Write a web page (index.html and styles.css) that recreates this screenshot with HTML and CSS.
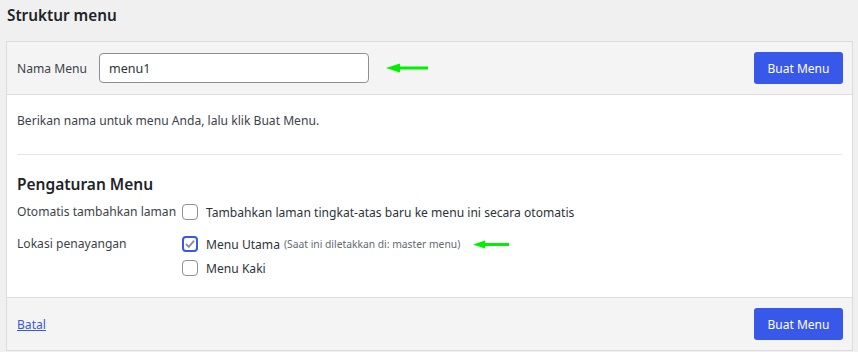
FILE: index.html
```html
<!DOCTYPE html>
<html lang="id">
<head>
    <meta charset="UTF-8">
    <link rel="stylesheet" href="styles.css">
    <title>Struktur menu</title>
</head>
<body>
    <h2 class="page-title">Struktur menu</h2>
    <div class="menu-box">
        <div class="box-header">
            <label class="name-label" for="menu-name">Nama Menu</label>
            <input type="text" id="menu-name" class="name-input" value="menu1">
            <svg class="arrow" width="44" height="10" viewBox="0 0 44 10">
                <path d="M1 5 L15 0.5 L15 3.5 L43 3.5 L43 6.5 L15 6.5 L15 9.5 Z" fill="#00f000"/>
            </svg>
            <button class="btn-primary">Buat Menu</button>
        </div>
        <div class="box-body">
            <p class="hint">Berikan nama untuk menu Anda, lalu klik Buat Menu.</p>
            <div class="divider"></div>
            <h3 class="section-title">Pengaturan Menu</h3>
            <div class="setting-row">
                <div class="setting-label">Otomatis tambahkan laman</div>
                <div class="setting-options">
                    <label class="option"><span class="checkbox"></span>Tambahkan laman tingkat-atas baru ke menu ini secara otomatis</label>
                </div>
            </div>
            <div class="setting-row locations">
                <div class="setting-label">Lokasi penayangan</div>
                <div class="setting-options">
                    <label class="option">
                        <span class="checkbox checked">
                            <svg width="14" height="14" viewBox="0 0 14 14"><path d="M2.3 7 L5.6 10.3 L11.8 3" fill="none" stroke="#8c8f94" stroke-width="2.2"/></svg>
                        </span>Menu Utama <span class="note">(Saat ini diletakkan di: master menu)</span>
                        <svg class="arrow small" width="38" height="9" viewBox="0 0 38 9">
                            <path d="M1 4.5 L13 0.5 L13 3 L37 3 L37 6 L13 6 L13 8.5 Z" fill="#00f000"/>
                        </svg>
                    </label>
                    <label class="option"><span class="checkbox"></span>Menu Kaki</label>
                </div>
            </div>
        </div>
        <div class="box-footer">
            <a href="#" class="cancel-link">Batal</a>
            <button class="btn-primary">Buat Menu</button>
        </div>
    </div>
</body>
</html>
```

FILE: styles.css
```css
body {
    margin: 0;
    background-color: #f0f0f1;
    font-family: "Noto Sans", "Open Sans", sans-serif;
    font-size: 12.1px;
    color: #3c434a;
}

.page-title {
    margin: 0;
    padding: 5px 7px 0;
    height: 36px;
    font-size: 15.3px;
    font-weight: 600;
    color: #1d2327;
}

.menu-box {
    margin-left: 6px;
    width: 845px;
    border: 1px solid #dcdcde;
    background-color: #fff;
}

.box-header {
    display: flex;
    align-items: center;
    height: 52px;
    padding: 0 9px 0 10px;
    background-color: #f4f4f4;
    border-bottom: 1px solid #dcdcde;
}

.name-label {
    width: 82px;
}

.name-input {
    box-sizing: border-box;
    width: 270px;
    height: 30px;
    margin: 0;
    padding: 0 9px;
    border: 1px solid #8c8f94;
    border-radius: 4px;
    font-family: inherit;
    font-size: 12.5px;
    color: #2c3338;
    background: #fff;
}

.arrow {
    margin-left: 16px;
}

.box-header .btn-primary {
    margin-left: auto;
}

.btn-primary {
    box-sizing: border-box;
    width: 89px;
    height: 32px;
    border: none;
    border-radius: 3px;
    background-color: #3858e9;
    color: #fff;
    font-family: inherit;
    font-size: 12px;
    padding: 0;
}

.box-body {
    padding: 0 10px 0 10px;
    height: 202px;
}

.hint {
    margin: 0;
    padding-top: 17px;
    height: 42px;
}

.divider {
    height: 1px;
    background-color: #e5e5e5;
}

.section-title {
    margin: 0;
    padding-top: 18px;
    height: 31px;
    font-size: 15.5px;
    font-weight: 600;
    color: #1d2327;
}

.setting-row {
    display: flex;
    align-items: flex-start;
}

.setting-row.locations {
    margin-top: 16px;
}

.setting-label {
    width: 165px;
    line-height: 16px;
    flex-shrink: 0;
}

.setting-options {
    display: flex;
    flex-direction: column;
    gap: 8px;
}

.option {
    display: flex;
    align-items: center;
    height: 16px;
    color: #2c3338;
}

.checkbox {
    box-sizing: border-box;
    display: inline-flex;
    align-items: center;
    justify-content: center;
    width: 16px;
    height: 16px;
    margin-right: 8px;
    border: 1px solid #8c8f94;
    border-radius: 4px;
    background: #fff;
}

.checkbox.checked {
    border: 2px solid #3858e9;
}

.note {
    margin-left: 4px;
    font-size: 10.3px;
    color: #646970;
}

.arrow.small {
    margin-left: 12px;
}

.box-footer {
    display: flex;
    align-items: center;
    justify-content: space-between;
    height: 52px;
    padding: 0 9px 0 10px;
    background-color: #f4f4f4;
    border-top: 1px solid #dcdcde;
}

.cancel-link {
    color: #3858e9;
    text-decoration: underline;
}
```
